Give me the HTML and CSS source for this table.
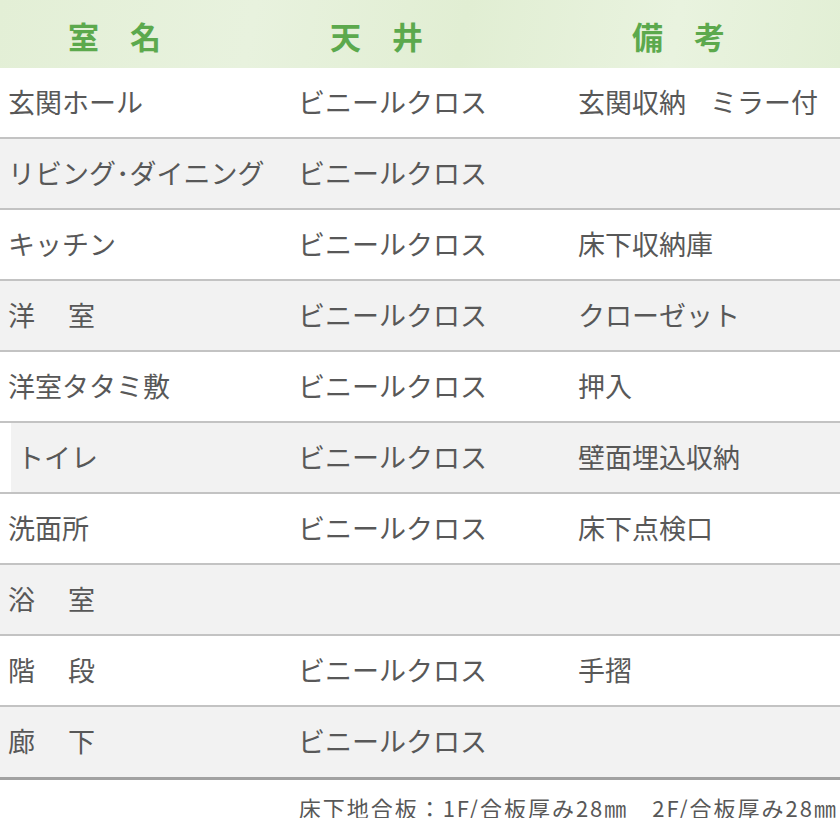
FILE: index.html
```html
<!DOCTYPE html>
<html lang="ja">
<head>
<meta charset="utf-8">
<title>仕様表</title>
<link rel="stylesheet" href="styles.css">
</head>
<body>
<div class="spec">
  <div class="head">
    <div class="hc hc1">室　名</div>
    <div class="hc hc2">天　井</div>
    <div class="hc hc3">備　考</div>
  </div>
  <div class="row"><div class="c">玄関ホール</div><div class="c">ビニールクロス</div><div class="c ws">玄関収納 ミラー付</div></div>
  <div class="row alt"><div class="c">リビング･ダイニング</div><div class="c">ビニールクロス</div><div class="c"></div></div>
  <div class="row"><div class="c">キッチン</div><div class="c">ビニールクロス</div><div class="c">床下収納庫</div></div>
  <div class="row alt"><div class="c sp">洋　室</div><div class="c">ビニールクロス</div><div class="c">クローゼット</div></div>
  <div class="row"><div class="c">洋室タタミ敷</div><div class="c">ビニールクロス</div><div class="c">押入</div></div>
  <div class="row alt inset"><div class="c">トイレ</div><div class="c">ビニールクロス</div><div class="c">壁面埋込収納</div></div>
  <div class="row"><div class="c">洗面所</div><div class="c">ビニールクロス</div><div class="c">床下点検口</div></div>
  <div class="row alt"><div class="c sp">浴　室</div><div class="c"></div><div class="c"></div></div>
  <div class="row"><div class="c sp">階　段</div><div class="c">ビニールクロス</div><div class="c">手摺</div></div>
  <div class="row alt last"><div class="c sp">廊　下</div><div class="c">ビニールクロス</div><div class="c"></div></div>
  <p class="note">床下地合板：1F/合板厚み28㎜　2F/合板厚み28㎜</p>
</div>
</body>
</html>
```
FILE: styles.css
```css
html, body {
  margin: 0;
  padding: 0;
  background: #ffffff;
}
body {
  font-family: "Noto Sans CJK JP", "Noto Sans", sans-serif;
  color: #585858;
  width: 840px;
  overflow: hidden;
}
.spec {
  width: 840px;
}
.head {
  height: 68px;
  display: grid;
  grid-template-columns: 290px 280px 1fr;
  align-items: center;
  background: linear-gradient(100deg, #e3efd6 0%, #e8f2de 30%, #e1eed3 55%, #e9f3df 80%, #e2efd5 100%);
}
.hc {
  color: #5ca94d;
  font-size: 31px;
  font-weight: 700;
  line-height: 1;
  padding-top: 2px;
}
.hc1 { padding-left: 68px; }
.hc2 { padding-left: 40px; }
.hc3 { padding-left: 62px; }
.row {
  height: 69px;
  display: grid;
  grid-template-columns: 290px 280px 1fr;
  align-items: center;
  border-bottom: 2px solid #c3c3c3;
  font-size: 27px;
  line-height: 1;
}
.row.alt {
  background: #f2f2f2;
}
.row.last {
  height: 70px;
  border-bottom: 3px solid #a2a2a2;
}
.c {
  padding-left: 8px;
  padding-bottom: 3px;
  white-space: nowrap;
}
.c.sp {
  letter-spacing: 3px;
}
.c.ws {
  word-spacing: 18px;
}
.row.inset {
  background: linear-gradient(90deg, #ffffff 0, #ffffff 11px, #f2f2f2 11px);
}
.row.inset .c:first-child {
  padding-left: 17px;
}
.note {
  margin: 0;
  padding: 16px 2px 0 0;
  text-align: right;
  font-size: 22px;
  letter-spacing: 2px;
  line-height: 1;
  color: #585858;
  white-space: nowrap;
}
```
